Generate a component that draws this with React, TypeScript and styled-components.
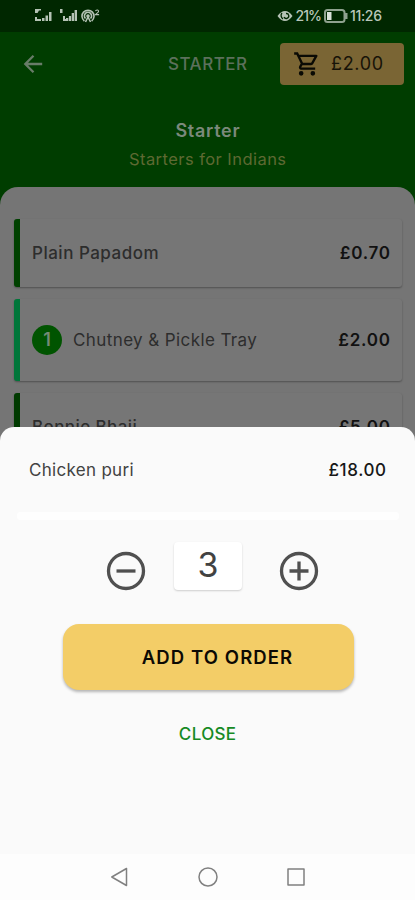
import React from "react";
import styled, { createGlobalStyle } from "styled-components";

const GlobalStyle = createGlobalStyle`
  * { box-sizing: border-box; }
  html, body { margin: 0; padding: 0; }
  body { font-family: Inter, "Liberation Sans", sans-serif; background: #fafafa; }
  button { border: 0; padding: 0; background: none; font: inherit; }
`;

const Phone = styled.main`
  position: relative;
  display: flex;
  flex-direction: column;
  width: 415px;
  height: 900px;
  overflow: hidden;
  background: #003d00;
`;

const Label = styled.span<{ $size: number; $weight?: number; $color: string; $track?: number }>`
  font-size: ${(p) => p.$size}px;
  font-weight: ${(p) => p.$weight ?? 500};
  color: ${(p) => p.$color};
  letter-spacing: ${(p) => p.$track ?? 0}px;
  margin-right: ${(p) => -(p.$track ?? 0)}px;
  line-height: 20px;
  white-space: nowrap;
`;

const StatusBar = styled.header`
  display: flex;
  flex: none;
  justify-content: space-between;
  align-items: center;
  height: 32px;
  padding: 0 33px 0 34px;
  background: #002700;
`;

const StatusGroup = styled.div<{ $gap: number }>`
  display: flex;
  align-items: center;
  gap: ${(p) => p.$gap}px;
`;

const AppBar = styled.nav`
  display: grid;
  flex: none;
  grid-template-columns: 168px 112px 124px;
  align-items: center;
  height: 64px;
`;

const BackButton = styled.button`
  display: flex;
  justify-self: start;
  margin-left: 21px;
`;

const CartButton = styled.button`
  display: flex;
  align-items: center;
  height: 42px;
  padding-left: 13px;
  gap: 10px;
  border-radius: 4px;
  background: #7a6534;
`;

const Intro = styled.section`
  display: flex;
  flex: none;
  flex-direction: column;
  align-items: center;
  gap: 8px;
  height: 91px;
  padding-top: 25px;
`;

const Menu = styled.section`
  display: flex;
  flex: 1;
  flex-direction: column;
  gap: 12px;
  padding: 32px 13px 0 14px;
  border-radius: 18px 18px 0 0;
  background: #757575;
`;

const Item = styled.article<{ $height: number; $accent: string }>`
  display: flex;
  flex: none;
  align-items: center;
  justify-content: space-between;
  height: ${(p) => p.$height}px;
  padding: 0 12px;
  border-left: 6px solid ${(p) => p.$accent};
  border-radius: 3px;
  background: #767676;
  box-shadow: 0 1px 2px rgba(0, 0, 0, 0.32);
`;

const ItemName = styled.div`
  display: flex;
  align-items: center;
  gap: 11px;
`;

const Count = styled.span`
  display: grid;
  place-items: center;
  width: 30px;
  height: 30px;
  border-radius: 50%;
  background: #005400;
`;

const Sheet = styled.section`
  position: absolute;
  inset: 427px 0 0;
  display: flex;
  flex-direction: column;
  align-items: center;
  border-radius: 14px 14px 0 0;
  background: #fafafa;
`;

const SheetHeader = styled.header`
  display: flex;
  flex: none;
  justify-content: space-between;
  align-items: center;
  width: 100%;
  height: 85px;
  padding: 0 29px;
`;

const Divider = styled.div`
  flex: none;
  width: 382px;
  height: 8px;
  border-radius: 3px;
  background: #fefefe;
`;

const Stepper = styled.div`
  display: flex;
  flex: none;
  justify-content: space-between;
  align-items: center;
  width: 213px;
  height: 50px;
  margin: 21px 0 33px 10px;
`;

const StepButton = styled.button`
  display: flex;
  padding-top: 9px;
`;

const Quantity = styled.output`
  display: flex;
  justify-content: center;
  width: 68px;
  height: 48px;
  margin-right: 9px;
  padding-top: 13px;
  border-radius: 4px;
  background: #ffffff;
  box-shadow: 0 1px 2px rgba(0, 0, 0, 0.18);
`;

const AddButton = styled.button`
  display: flex;
  flex: none;
  justify-content: center;
  align-items: center;
  width: 291px;
  height: 66px;
  margin-left: 1px;
  padding-left: 18px;
  border-radius: 16px;
  background: #f3cd67;
  box-shadow: 0 2px 3px rgba(0, 0, 0, 0.28);
`;

const CloseButton = styled.button`
  display: flex;
  flex: none;
  margin-top: 34px;
`;

const SystemNav = styled.footer`
  display: flex;
  justify-content: center;
  align-items: center;
  gap: 68px;
  width: 100%;
  height: 46px;
  margin-top: auto;
  background: #fdfdfd;
`;

const light = "#b5c3b5";

const SignalIcon = ({ wide = false }: { wide?: boolean }) => (
  <svg width="18" height="14" viewBox="0 0 18 14" fill={light}>
    <path d={wide ? "M0 0h2.500v4H0zM3 7h2v3h2v2H3z" : "M1 0h6v1.500H5L3.500 4H1zM1 8h2v2h4v2H1z"} />
    <path d={wide ? "M6 9h2.300v3H6zM8.900 7h2.200v5H8.900zM11.700 4h2.300v8h-2.300zM14.600 1H17v11h-2.400z" : "M8 9h2.500v3H8zM11.500 6.500H14V12h-2.500zM15 3h2.500v9H15z"} />
  </svg>
);

const HotspotIcon = () => (
  <svg width="20" height="14" viewBox="0 0 20 14" fill="none" stroke={light} strokeWidth="1.6">
    <path d="M3.400 12A6 6 0 1 1 10.600 12M4.500 9.500a3.600 3.600 0 1 1 5 0" />
    <path d="M4.500 13l2.500-5 2.500 5" />
    <circle cx="7" cy="7" r="1" fill={light} />
    <path d="M14.500 2.200c.5-1.800 3.500-1.500 3 .4-.2.900-2.200 1.800-3 3h3.600" strokeWidth="1.100" />
  </svg>
);

const EyeIcon = () => (
  <svg width="16" height="12" viewBox="0 0 16 12">
    <path d="M.5 6Q4 1 8 1t7.500 5Q12 11 8 11T.5 6z" fill={light} />
    <path d="M5 3a4 4 0 0 0 1 6M9 3.500a2.500 2.500 0 1 1-2 3.500" fill="none" stroke="#002700" strokeWidth="1.300" />
  </svg>
);

const BatteryIcon = () => (
  <svg width="24" height="14" viewBox="0 0 24 14">
    <rect x="1" y="1" width="19.500" height="12" rx="2.500" fill="none" stroke="#8fa28f" strokeWidth="2" />
    <path d="M21 4h2.500v6H21z" fill="#8fa28f" />
    <path d="M3 3h4.500v8H3z" fill="#d9e2d9" />
  </svg>
);

const BackIcon = () => (
  <svg width="24" height="24" viewBox="0 0 24 24" fill="none" stroke="#687c68" strokeWidth="2.300">
    <path d="M21.200 12H4.500M12.500 3.800L4.300 12l8.200 8.200" />
  </svg>
);

const CartIcon = () => (
  <svg width="28" height="28" viewBox="0 0 24 24" fill="#0a0a04">
    <path d="M15.550 13c.75 0 1.410-.41 1.750-1.030l3.580-6.490A.996.996 0 0 0 20.010 4H5.210l-.94-2H1v2h2l3.600 7.590-1.350 2.440C4.520 15.370 5.480 17 7 17h12v-2H7l1.100-2h7.450zM6.160 6h12.150l-2.760 5H8.530L6.160 6zM7 18a2 2 0 1 0 0 4 2 2 0 0 0 0-4zm10 0a2 2 0 1 0 0 4 2 2 0 0 0 0-4z" />
  </svg>
);

const StepIcon = ({ plus = false }: { plus?: boolean }) => (
  <svg width="40" height="40" viewBox="0 0 40 40" fill="none" stroke="#505050" strokeWidth="3.300">
    <circle cx="20" cy="20" r="17.500" />
    <path d={plus ? "M10.500 20h19M20 10.500v19" : "M10.500 20h19"} />
  </svg>
);

const NavIcon = ({ d }: { d: string }) => (
  <svg width="20" height="20" viewBox="0 0 20 20" fill="none" stroke="#808080" strokeWidth="1.500" strokeLinejoin="round">
    <path d={d} />
  </svg>
);

const items = [
  { name: "Plain Papadom", price: "£0.70", height: 68, accent: "#004100", track: 0.5 },
  { name: "Chutney & Pickle Tray", price: "£2.00", height: 82, accent: "#00763a", track: 0.4, count: 1 },
  { name: "Bonnie Bhaji", price: "£5.00", height: 68, accent: "#003a00", track: 0.4 },
];

export default function App() {
  return (
    <Phone>
      <GlobalStyle />
      <StatusBar>
        <StatusGroup $gap={8}>
          <SignalIcon />
          <StatusGroup $gap={3}>
            <SignalIcon wide />
            <HotspotIcon />
          </StatusGroup>
        </StatusGroup>
        <StatusGroup $gap={2}>
          <EyeIcon />
          <Label $size={14} $color="#b9c6b9" $track={-0.95}>21%</Label>
          <BatteryIcon />
          <Label $size={14} $color="#b9c6b9" $track={-0.3}>11:26</Label>
        </StatusGroup>
      </StatusBar>
      <AppBar>
        <BackButton aria-label="Back"><BackIcon /></BackButton>
        <Label $size={17} $color="#5c705c" $track={0.5}>STARTER</Label>
        <CartButton>
          <CartIcon />
          <Label $size={18} $weight={400} $color="#171308" $track={0.7}>£2.00</Label>
        </CartButton>
      </AppBar>
      <Intro>
        <Label $size={18} $weight={600} $color="#7b897b" $track={0.7}>Starter</Label>
        <Label $size={16.5} $weight={400} $color="#5e6932" $track={0.45}>Starters for Indians</Label>
      </Intro>
      <Menu>
        {items.map((item) => (
          <Item key={item.name} $height={item.height} $accent={item.accent}>
            <ItemName>
              {item.count && <Count><Label $size={18} $weight={600} $color="#748a74">{item.count}</Label></Count>}
              <Label $size={17} $weight={item.count ? 400 : 500} $color="#2d2d2d" $track={item.track}>{item.name}</Label>
            </ItemName>
            <Label $size={17} $weight={600} $color="#111111" $track={0.75}>{item.price}</Label>
          </Item>
        ))}
      </Menu>
      <Sheet>
        <SheetHeader>
          <Label $size={17} $weight={400} $color="#424242" $track={0.3}>Chicken puri</Label>
          <Label $size={17} $color="#171717" $track={0.6}>£18.00</Label>
        </SheetHeader>
        <Divider />
        <Stepper>
          <StepButton aria-label="Decrease"><StepIcon /></StepButton>
          <Quantity><Label $size={34} $weight={400} $color="#424242">3</Label></Quantity>
          <StepButton aria-label="Increase"><StepIcon plus /></StepButton>
        </Stepper>
        <AddButton><Label $size={18.5} $weight={600} $color="#0c0a04" $track={1.1}>ADD TO ORDER</Label></AddButton>
        <CloseButton><Label $size={17} $color="#168a24" $track={0.35}>CLOSE</Label></CloseButton>
        <SystemNav>
          <NavIcon d="M16.500 1.500v17L1.800 10z" />
          <NavIcon d="M19 10a9 9 0 1 1-18 0 9 9 0 0 1 18 0" />
          <NavIcon d="M2 2h16v16H2z" />
        </SystemNav>
      </Sheet>
    </Phone>
  );
}
